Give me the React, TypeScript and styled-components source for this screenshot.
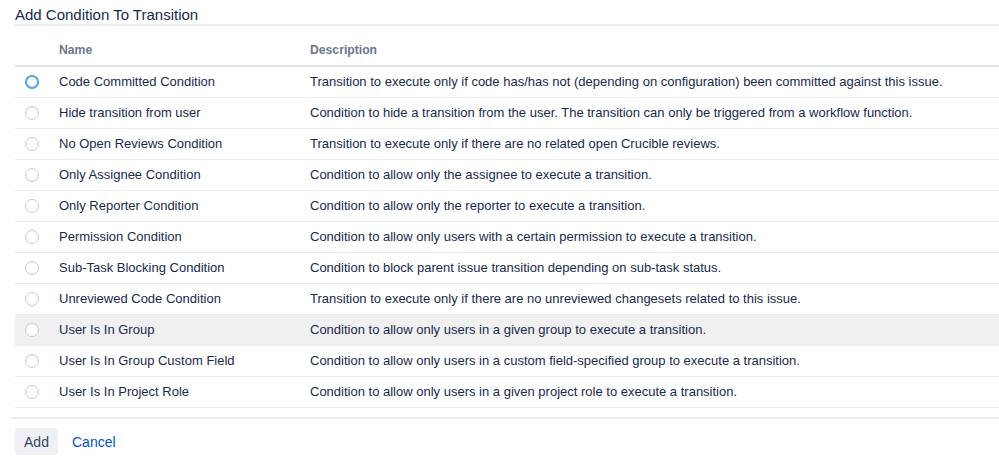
import * as React from "react";
import styled, { createGlobalStyle } from "styled-components";

const GlobalStyle = createGlobalStyle`
  html, body {
    margin: 0;
    padding: 0;
    background: #ffffff;
    font-family: "Liberation Sans", Arial, sans-serif;
    color: #172b4d;
  }
`;

const Page = styled.div`
  width: 999px;
  height: 467px;
  overflow: hidden;
  display: flex;
  flex-direction: column;
`;

const Title = styled.h2`
  margin: 0 0 0 15px;
  padding: 9px 0 3px;
  font-size: 15px;
  line-height: 12px;
  font-weight: 400;
  color: #172b4d;
  border-bottom: 2px solid #ebecf0;
`;

const Table = styled.table`
  margin: 8px 0 0 15px;
  width: 984px;
  border-collapse: collapse;
  font-size: 13px;
`;

const HeadCell = styled.th<{ width?: number }>`
  text-align: left;
  padding: 8px 10px 7px;
  line-height: 16px;
  font-size: 12.2px;
  font-weight: 700;
  color: #6b778c;
  border-bottom: 2px solid #dfe1e6;
  width: ${(p) => (p.width ? `${p.width}px` : "auto")};
  box-sizing: border-box;
`;

const Row = styled.tr<{ highlighted?: boolean }>`
  background: ${(p) => (p.highlighted ? "#f0f0f0" : "transparent")};
  border-bottom: 1px solid #ebecf0;
`;

const Cell = styled.td`
  padding: 7px 10px;
  line-height: 16px;
  height: 16px;
  color: #172b4d;
  white-space: nowrap;
`;

const RadioCell = styled.td`
  padding: 7px 0 7px 10px;
  line-height: 16px;
  vertical-align: middle;
`;

const Radio = styled.span<{ focused?: boolean }>`
  display: block;
  box-sizing: border-box;
  width: 14px;
  height: 14px;
  border-radius: 50%;
  background: #ffffff;
  border: ${(p) => (p.focused ? "2px solid #5a9bf3" : "1px solid #c8c9cc")};
`;

const Footer = styled.div`
  margin: 9px 0 0 10px;
  border-top: 2px solid #ebecf0;
  padding: 9px 0 0 5px;
  display: flex;
  align-items: center;
  gap: 14px;
`;

const Button = styled.button`
  height: 27px;
  width: 43px;
  padding: 0;
  border: none;
  border-radius: 3px;
  background: #eff0f3;
  color: #344563;
  font-family: "Liberation Sans", Arial, sans-serif;
  font-size: 14px;
`;

const LinkButton = styled.a`
  color: #0052cc;
  font-size: 14px;
  text-decoration: none;
`;

const conditions = [
  ["Code Committed Condition", "Transition to execute only if code has/has not (depending on configuration) been committed against this issue."],
  ["Hide transition from user", "Condition to hide a transition from the user. The transition can only be triggered from a workflow function."],
  ["No Open Reviews Condition", "Transition to execute only if there are no related open Crucible reviews."],
  ["Only Assignee Condition", "Condition to allow only the assignee to execute a transition."],
  ["Only Reporter Condition", "Condition to allow only the reporter to execute a transition."],
  ["Permission Condition", "Condition to allow only users with a certain permission to execute a transition."],
  ["Sub-Task Blocking Condition", "Condition to block parent issue transition depending on sub-task status."],
  ["Unreviewed Code Condition", "Transition to execute only if there are no unreviewed changesets related to this issue."],
  ["User Is In Group", "Condition to allow only users in a given group to execute a transition."],
  ["User Is In Group Custom Field", "Condition to allow only users in a custom field-specified group to execute a transition."],
  ["User Is In Project Role", "Condition to allow only users in a given project role to execute a transition."],
];

const App: React.FC = () => {
  return (
    <Page>
      <GlobalStyle />
      <Title>Add Condition To Transition</Title>
      <Table>
        <thead>
          <tr>
            <HeadCell width={34} />
            <HeadCell width={251}>Name</HeadCell>
            <HeadCell>Description</HeadCell>
          </tr>
        </thead>
        <tbody>
          {conditions.map(([name, desc], i) => (
            <Row key={name} highlighted={i === 8}>
              <RadioCell>
                <Radio focused={i === 0} />
              </RadioCell>
              <Cell>{name}</Cell>
              <Cell>{desc}</Cell>
            </Row>
          ))}
        </tbody>
      </Table>
      <Footer>
        <Button>Add</Button>
        <LinkButton href="#">Cancel</LinkButton>
      </Footer>
    </Page>
  );
};

export default App;
